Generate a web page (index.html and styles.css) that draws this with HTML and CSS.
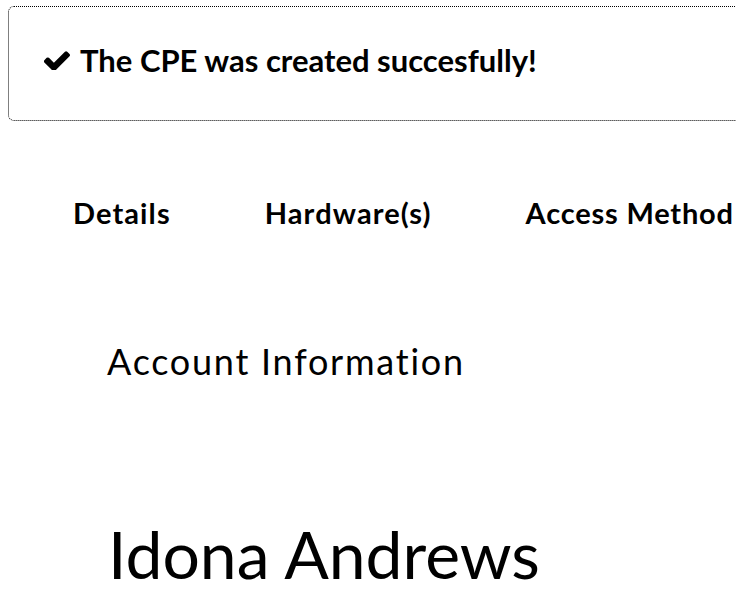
FILE: index.html
```html
<!DOCTYPE html>
<html>
<head>
<meta charset="utf-8">
<link rel="stylesheet" href="styles.css">
</head>
<body>
<div class="page">
  <div class="alert">
    <svg class="check" viewBox="128 330 1543 1100" width="26" height="19"><path d="M1671 566q0 40-28 68l-724 724-136 136q-28 28-68 28t-68-28l-136-136-362-362q-28-28-28-68t28-68l136-136q28-28 68-28t68 28l294 295 656-657q28-28 68-28t68 28l136 136q28 28 28 68z"/></svg>
    <span class="alert-text">The CPE was created succesfully!</span>
  </div>
  <nav class="tabs">
    <span class="tab">Details</span>
    <span class="tab">Hardware(s)</span>
    <span class="tab">Access Method</span>
  </nav>
  <h2 class="section-title">Account Information</h2>
  <h1 class="name">Idona Andrews</h1>
</div>
</body>
</html>
```
FILE: styles.css
```css
html, body {
  margin: 0;
  padding: 0;
  background: #fff;
  overflow: hidden;
}
body {
  font-family: Lato, "Open Sans", sans-serif;
  font-variant-ligatures: none;
  color: #000;
  width: 736px;
  height: 614px;
}
.page {
  width: 736px;
  overflow: hidden;
}
.alert {
  box-sizing: border-box;
  margin: 6px 0 0 8px;
  width: 740px;
  height: 115px;
  border: 1px dotted #000;
  border-radius: 6px;
  display: flex;
  align-items: center;
  gap: 10px;
  padding-left: 35px;
  padding-bottom: 7px;
}
.check {
  fill: #000;
  flex: none;
}
.alert-text {
  font-weight: 700;
  font-size: 31px;
  white-space: nowrap;
}
.tabs {
  display: flex;
  gap: 94px;
  padding-left: 73px;
  margin-top: 75px;
  white-space: nowrap;
}
.tab {
  font-weight: 700;
  font-size: 29px;
  line-height: 34px;
  letter-spacing: 1.1px;
}
.tab:last-child {
  letter-spacing: 0.8px;
}
.section-title {
  margin: 109px 0 0 107px;
  font-weight: 400;
  font-size: 36px;
  line-height: 44px;
  letter-spacing: 1.75px;
}
.name {
  margin: 131px 0 0 108px;
  font-weight: 400;
  font-size: 66px;
  line-height: 80px;
}
```
